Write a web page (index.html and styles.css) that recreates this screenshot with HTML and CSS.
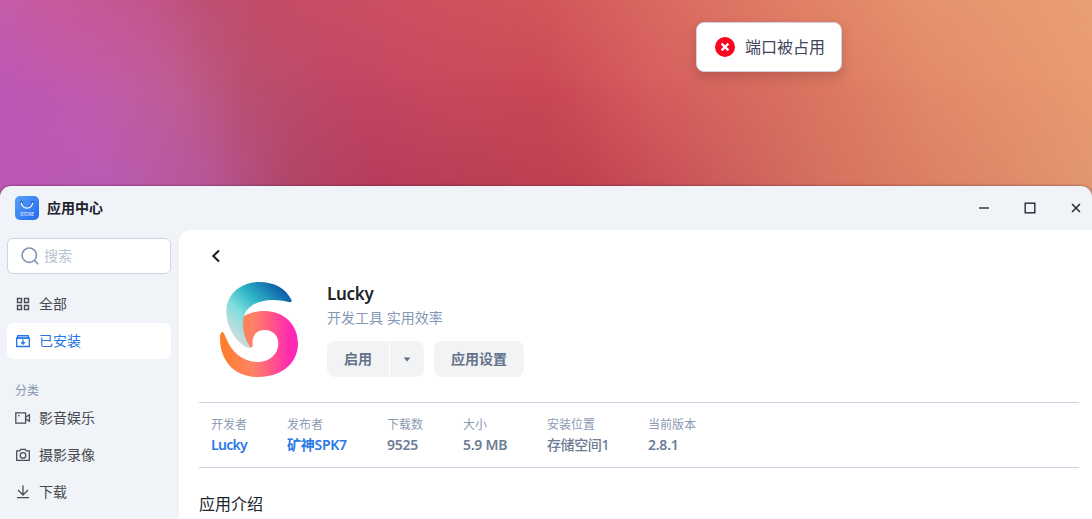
FILE: index.html
```html
<!DOCTYPE html>
<html lang="zh-CN">
<head>
<meta charset="utf-8">
<title>应用中心</title>
<link rel="stylesheet" href="styles.css">
</head>
<body>
<div class="desktop">
  <div class="wall wall-top"></div>
  <div class="wall wall-mid"></div>
  <div class="wall wall-low"></div>
  <div class="toast">
    <svg width="20" height="20" viewBox="0 0 20 20"><circle cx="10" cy="10" r="10" fill="#ff0420"/><path d="M6.6 6.6l6.8 6.8M13.4 6.6l-6.8 6.8" stroke="#fff" stroke-width="2.2"/></svg>
    <span>端口被占用</span>
  </div>
  <div class="window">
    <header class="titlebar">
      <svg class="logo" width="24" height="24" viewBox="0 0 24 24">
        <defs><linearGradient id="store" x1="0" y1="0" x2="1" y2="1"><stop offset="0" stop-color="#57a2f8"/><stop offset="1" stop-color="#2468ef"/></linearGradient></defs>
        <rect width="24" height="24" rx="5" fill="url(#store)"/>
        <circle cx="6.5" cy="6.2" r="1.2" fill="#1c4e9e"/><circle cx="17.5" cy="6.2" r="1.2" fill="#1c4e9e"/>
        <path d="M6.3 6.5C7.2 14 16.8 14 17.7 6.5" fill="none" stroke="#fff" stroke-width="1.2"/>
        <text x="12" y="19.8" class="logo-text" text-anchor="middle" textLength="14">STORE</text>
      </svg>
      <h1>应用中心</h1>
      <div class="controls">
        <svg width="12" height="12" viewBox="0 0 12 12"><path d="M1 6h10" stroke="#55585f" stroke-width="1.8"/></svg>
        <svg width="12" height="12" viewBox="0 0 12 12"><rect x="1.2" y="1.2" width="9.6" height="9.6" fill="none" stroke="#25282e" stroke-width="1.4"/></svg>
        <svg width="12" height="12" viewBox="0 0 12 12"><path d="M2 2l8 8M10 2l-8 8" stroke="#25282e" stroke-width="1.5"/></svg>
      </div>
    </header>
    <div class="main">
      <aside class="sidebar">
        <div class="search">
          <svg width="18" height="18" viewBox="0 0 18 18" fill="none" stroke="#7f94b2" stroke-width="1.6"><circle cx="8.3" cy="8.2" r="7.2"/><path d="M13.4 13.4l3.8 3.8"/></svg>
          <span>搜索</span>
        </div>
        <nav class="menu">
          <div class="item">
            <svg width="16" height="16" viewBox="0 0 16 16" fill="none" stroke="#4b4e54" stroke-width="1.4"><path d="M2.5 2.5h4v4h-4zM9.5 2.5h4v4h-4zM2.5 9.5h4v4h-4zM9.5 9.5h4v4h-4z"/></svg>
            <span>全部</span>
          </div>
          <div class="item active">
            <svg width="16" height="16" viewBox="0 0 16 16" fill="none" stroke="#2376e5" stroke-width="1.3"><path d="M2.8 2.6h10.4l.7 2.6H2.1z" fill="#b6d3f8"/><path d="M1.7 5.2h12.6v8.3H1.7zM8 6.6v4.2M6 9.1l2 2 2-2"/></svg>
            <span>已安装</span>
          </div>
          <div class="group">分类</div>
          <div class="item">
            <svg width="16" height="16" viewBox="0 0 16 16" fill="none" stroke="#4b4e54" stroke-width="1.3"><path d="M.8 2.9h9.8v10.2H.8zM10.9 7l3.5-2.3v6.6L10.9 9M3 5.6h1.5"/></svg>
            <span>影音娱乐</span>
          </div>
          <div class="item">
            <svg width="16" height="16" viewBox="0 0 16 16" fill="none" stroke="#4b4e54" stroke-width="1.3"><path d="M1.7 3.9h3l1-1.6h4.6l1 1.6h3v9.5H1.7z"/><circle cx="8" cy="8.4" r="2.8"/></svg>
            <span>摄影录像</span>
          </div>
          <div class="item">
            <svg width="16" height="16" viewBox="0 0 16 16" fill="none" stroke="#4b4e54" stroke-width="1.3"><path d="M8 1.6v9.2M3 6L8 11l5-5M2 13.6h12"/></svg>
            <span>下载</span>
          </div>
        </nav>
      </aside>
      <section class="content">
        <svg class="back" width="10" height="14" viewBox="0 0 10 14"><path d="M8 1.5L2.3 7 8 12.5" fill="none" stroke="#15181c" stroke-width="2"/></svg>
        <div class="app">
          <svg class="app-icon" width="78" height="95" viewBox="90 141 234 285">
            <defs>
              <linearGradient id="teal" gradientUnits="userSpaceOnUse" x1="150" y1="335" x2="300" y2="180"><stop offset="0" stop-color="#d8dcdc"/><stop offset=".34" stop-color="#80dfdd"/><stop offset=".62" stop-color="#2db5c7"/><stop offset="1" stop-color="#0c5ba7"/></linearGradient>
              <linearGradient id="warm" x1="0" y1="0" x2="1" y2="0"><stop offset="0" stop-color="#ff7e28"/><stop offset=".42" stop-color="#ff8266"/><stop offset=".66" stop-color="#ff5788"/><stop offset=".9" stop-color="#ff28b4"/><stop offset="1" stop-color="#ff28b4"/></linearGradient>
            </defs>
            <path fill="url(#teal)" d="M304 194C287 160 252 141 208 141C150 141 109 178 109 230C109 278 142 325 172 338Q190 342 187 330L162 242C176 203 230 183 299 202Q308 202 304 194z"/>
            <path fill="url(#warm)" d="M162 243C180 234 200 228 225 228C282 228 324 270 324 325C324 385 275 426 205 426C135 426 90 380 90 308C90 287 100 286 104 300C125 355 160 381 205 381C240 381 265 357 265 325C265 302 248 285 225 285C201 285 186 300 188 326Q189 340 180 336C164 310 154 280 162 243z"/>
          </svg>
          <div class="info">
            <h2>Lucky</h2>
            <p>开发工具 实用效率</p>
            <div class="actions">
              <div class="split"><span class="btn start">启用</span><span class="btn arrow"><svg width="8" height="5" viewBox="0 0 8 5"><path d="M.7.5h6.6L4 4.5z" fill="#5e6d86"/></svg></span></div>
              <span class="btn settings">应用设置</span>
            </div>
          </div>
        </div>
        <dl class="stats">
          <div class="short"><dt>开发者</dt><dd class="link dev">Lucky</dd></div>
          <div class="publisher"><dt>发布者</dt><dd class="link">矿神SPK7</dd></div>
          <div class="short"><dt>下载数</dt><dd>9525</dd></div>
          <div class="size"><dt>大小</dt><dd>5.9 MB</dd></div>
          <div class="place"><dt>安装位置</dt><dd class="plain">存储空间1</dd></div>
          <div><dt>当前版本</dt><dd>2.8.1</dd></div>
        </dl>
        <h3>应用介绍</h3>
      </section>
    </div>
  </div>
</div>
</body>
</html>
```
FILE: styles.css
```css
* { box-sizing: border-box; margin: 0; padding: 0; }
body { font-family: "Noto Sans", "Noto Sans CJK SC", sans-serif; }
svg { display: block; flex: none; }
.desktop { position: relative; width: 1092px; height: 519px; overflow: hidden; padding-top: 186px; }
.wall { position: absolute; left: 0; top: 0; width: 100%; height: 200px; }
.wall-top { background: linear-gradient(90deg, #c45dab 0, #c85a9d 55px, #c3568d 150px, #bd5074 205px, #c54c66 270px, #cc4f62 390px, #d1555a 530px, #db6b61 670px, #e18167 800px, #e5946e 930px, #ea9f74 1092px); }
.wall-mid { background: linear-gradient(90deg, #bb57b4 0, #c15bad 90px, #bf5e94 175px, #b94f70 245px, #c14665 340px, #c8495d 450px, #c94856 545px, #d65d5e 650px, #da7160 790px, #e28a6a 930px, #e99b71 1092px); -webkit-mask-image: linear-gradient(transparent, #000 95px); mask-image: linear-gradient(transparent, #000 95px); }
.wall-low { background: linear-gradient(90deg, #bb58b5 0, #b95bb2 110px, #b75798 205px, #b04669 290px, #b73c5c 370px, #b83f55 470px, #c04150 580px, #ca555a 690px, #d36f5e 810px, #db8065 930px, #e19770 1092px); -webkit-mask-image: linear-gradient(transparent 80px, #000 188px); mask-image: linear-gradient(transparent 80px, #000 188px); }
.toast { position: absolute; left: 696px; top: 22px; width: 146px; height: 50px; display: flex; align-items: center; gap: 10px; padding-left: 18px; border: 1px solid #cfd2de; border-radius: 8px; background: #fff; color: #41465c; font-size: 16px; white-space: nowrap; box-shadow: 0 6px 12px rgba(80, 30, 35, .22); }
.toast span, .item span, .search span { padding-bottom: 2px; }
.window { position: relative; height: 333px; background: #f0f3f8; border-radius: 11px 11px 0 0; box-shadow: 0 0 3px rgba(50, 20, 40, .6); }
.titlebar { height: 44px; display: flex; align-items: center; padding: 0 10px 0 15px; gap: 8px; }
.logo-text { font-size: 5px; fill: #e4efff; }
h1 { font-size: 14px; font-weight: 700; color: #1d2129; line-height: 20px; }
.controls { display: flex; gap: 34px; margin-left: auto; }
.main { display: flex; height: 289px; }
.sidebar { width: 179px; padding: 8px 8px 0 7px; }
.search { height: 36px; display: flex; align-items: center; gap: 5px; padding-left: 13px; border: 1px solid #cbd5e2; border-radius: 6px; background: #fff; color: #b8c2d1; font-size: 14px; }
.menu { padding-top: 12px; }
.item { height: 36px; margin-bottom: 1px; display: flex; align-items: center; gap: 8px; padding-left: 8px; border-radius: 6px; color: #45484d; font-size: 14px; }
.active { background: #fff; color: #2376e5; }
.group { height: 40px; padding: 22px 0 0 8px; color: #8796b1; font-size: 12px; line-height: 18px; }
.content { flex: 1; height: 289px; padding: 19px 13px 0 20px; background: #fff; border-top-left-radius: 12px; }
.back { margin-left: 12px; }
.app { display: flex; gap: 29px; padding: 19px 0 0 21px; height: 139px; }
h2 { font-size: 17px; font-weight: 600; line-height: 24px; letter-spacing: -.3px; color: #202328; }
.info p { margin-top: 1px; font-size: 14px; line-height: 22px; color: #8498b8; }
.actions { display: flex; gap: 10px; margin-top: 12px; }
.split { display: flex; gap: 1px; }
.btn { height: 36px; display: flex; align-items: center; justify-content: center; background: #f2f3f5; color: #64728a; font-size: 14px; font-weight: 600; }
.start, .settings { padding-bottom: 2px; }
.start { width: 62px; border-radius: 8px 0 0 8px; }
.arrow { width: 34px; border-radius: 0 8px 8px 0; }
.settings { width: 90px; border-radius: 8px; }
.stats { height: 66px; display: flex; gap: 40px; padding: 13px 12px 0; border-top: 1px solid #c8d4e1; border-bottom: 1px solid #c8d4e1; white-space: nowrap; }
.short { width: 36px; }
.publisher { width: 60px; }
.size { width: 44px; }
.place { width: 61px; }
dt { color: #8b9bb4; font-size: 12px; line-height: 18px; }
dd { margin-top: 1px; color: #6c7c95; font-size: 14px; font-weight: 600; line-height: 20px; letter-spacing: -.25px; }
.link { color: #2878e7; }
.dev { letter-spacing: -.7px; }
.plain { font-weight: 500; letter-spacing: -.4px; }
h3 { margin-top: 24px; font-size: 16px; font-weight: 400; line-height: 24px; color: #202328; }
```
